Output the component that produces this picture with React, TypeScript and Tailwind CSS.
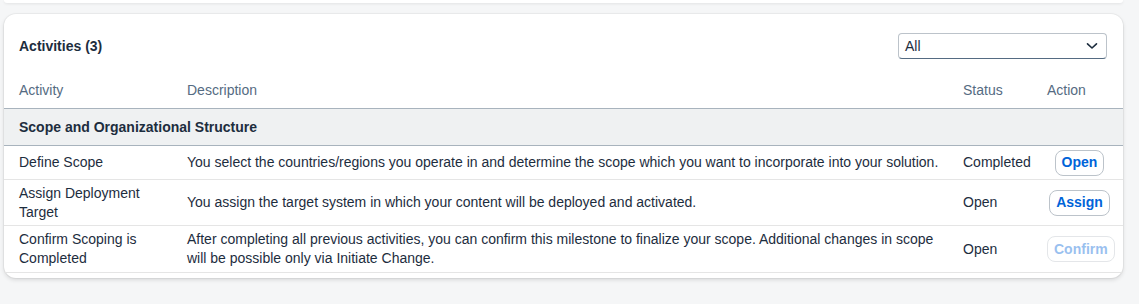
import React from "react";

const font = { fontFamily: '"Liberation Sans", Arial, sans-serif' };

function Btn({ label, disabled }: { label: string; disabled?: boolean }) {
  return (
    <button
      className={
        disabled
          ? "h-[26px] px-[6px] rounded-[8px] border border-[#bcc3ca] text-[14px] font-bold text-[#0064d9] bg-white opacity-40"
          : "h-[26px] px-[6px] rounded-[8px] border border-[#bcc3ca] text-[14px] font-bold text-[#0064d9] bg-white"
      }
    >
      {label}
    </button>
  );
}

const rows = [
  {
    a: "Define Scope",
    d: "You select the countries/regions you operate in and determine the scope which you want to incorporate into your solution.",
    s: "Completed",
    b: "Open",
    h: "h-[34px]",
  },
  {
    a: "Assign Deployment Target",
    d: "You assign the target system in which your content will be deployed and activated.",
    s: "Open",
    b: "Assign",
    h: "h-[46px]",
  },
  {
    a: "Confirm Scoping is Completed",
    d: "After completing all previous activities, you can confirm this milestone to finalize your scope. Additional changes in scope will be possible only via Initiate Change.",
    s: "Open",
    b: "Confirm",
    dis: true,
    h: "h-[47px]",
  },
];

export default function App() {
  return (
    <div className="min-h-[304px] w-[1139px] bg-[#f5f6f7] text-[#1d2d3e]" style={font}>
      <div className="ml-[4px] w-[1119px] h-[3px] bg-white rounded-b-[12px] shadow-[0_1px_3px_rgba(0,0,0,0.08)]" />
      <div className="mt-[11px] ml-[4px] w-[1119px] bg-white rounded-[12px] shadow-[0_0_0_1px_rgba(0,0,0,0.04),0_2px_4px_rgba(0,0,0,0.12)] pb-[5px]">
        <div className="h-[58px] pl-[15px] pr-[16px] pt-[19px] flex items-start justify-between">
          <div className="h-[26px] flex items-center text-[14px] font-bold">Activities (3)</div>
          <div className="w-[209px] h-[26px] rounded-[4px] border border-[#bcc3ca] border-b-[#556b82] flex items-center justify-between pl-[6px] pr-[8px] text-[14px]">
            <span>All</span>
            <svg width="12" height="8" viewBox="0 0 12 8" fill="none">
              <path d="M1.5 1.8 L6 6 L10.5 1.8" stroke="#1d2d3e" strokeWidth="1.6" strokeLinecap="round" strokeLinejoin="round" />
            </svg>
          </div>
        </div>
        <div className="h-[37px] pl-[15px] pr-[11px] grid grid-cols-[168px_776px_84px_1fr] items-center text-[14px] text-[#556b82] border-b border-[#a8b3bd]">
          <div className="pt-[1px]">Activity</div>
          <div className="pt-[1px]">Description</div>
          <div className="pt-[1px]">Status</div>
          <div className="pt-[1px]">Action</div>
        </div>
        <div className="h-[37px] pl-[15px] flex items-center bg-[#eff1f2] border-b border-[#a8b3bd] text-[14px] font-bold">
          Scope and Organizational Structure
        </div>
        {rows.map((r) => (
          <div
            key={r.a}
            className={`${r.h} pl-[15px] pr-[11px] grid grid-cols-[168px_776px_84px_1fr] items-center text-[14px] leading-[19px] border-b border-[#e5e5e5]`}
          >
            <div className="pr-[16px]">{r.a}</div>
            <div className="pr-[16px]">{r.d}</div>
            <div>{r.s}</div>
            <div className="flex justify-center">
              <Btn label={r.b} disabled={r.dis} />
            </div>
          </div>
        ))}
      </div>
    </div>
  );
}
